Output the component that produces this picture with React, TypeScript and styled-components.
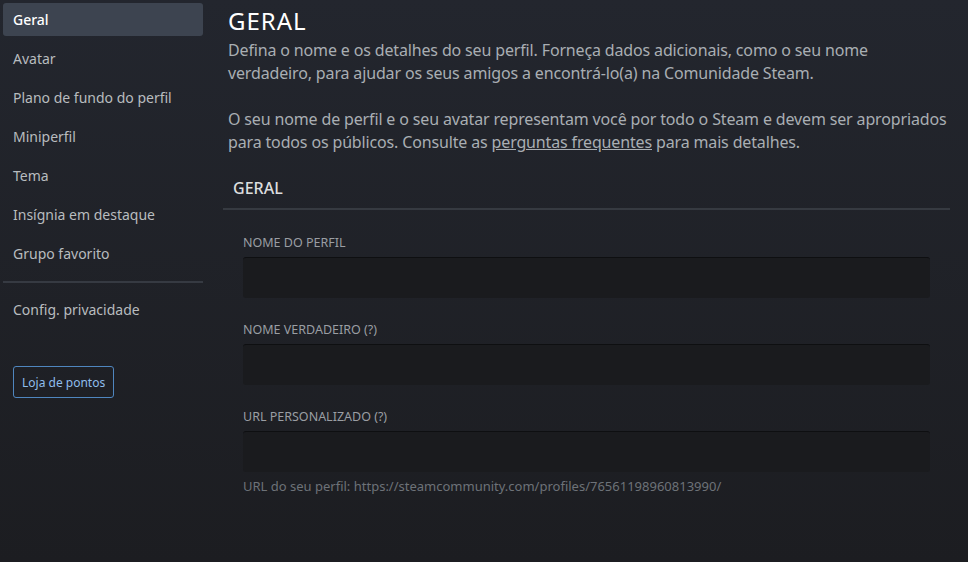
import React, { FC } from 'react';
import styled, { createGlobalStyle } from 'styled-components';

const GlobalStyle = createGlobalStyle`
  html, body {
    margin: 0;
    padding: 0;
    background: #1d1e22;
  }
  * {
    box-sizing: border-box;
  }
`;

const Page = styled.div`
  display: flex;
  width: 968px;
  height: 562px;
  overflow: hidden;
  background: linear-gradient(180deg, #23262e 0%, #1c1d21 100%);
  font-family: 'Noto Sans', 'Liberation Sans', sans-serif;
`;

const Sidebar = styled.nav`
  display: flex;
  flex-direction: column;
  width: 200px;
  flex-shrink: 0;
  margin: 3px 0 0 3px;
`;

const NavItem = styled.div<{ $active?: boolean }>`
  display: flex;
  align-items: center;
  height: 33px;
  margin-bottom: 6px;
  padding-left: 10px;
  border-radius: 3px;
  font-size: 14px;
  color: ${(p) => (p.$active ? '#ffffff' : '#b8bcbf')};
  font-weight: ${(p) => (p.$active ? 500 : 400)};
  background: ${(p) => (p.$active ? '#3d4450' : 'transparent')};
`;

const NavDivider = styled.div`
  height: 2px;
  margin: 5px 0 10px;
  background: #363a42;
`;

const PointsButton = styled.button`
  align-self: flex-start;
  margin: 34px 0 0 10px;
  height: 32px;
  padding: 0 8px;
  background: transparent;
  border: 1px solid #4f86bf;
  border-radius: 3px;
  font-family: inherit;
  font-size: 12px;
  color: #8fbdec;
`;

const Main = styled.main`
  display: flex;
  flex-direction: column;
  width: 727px;
  margin-left: 20px;
  padding-top: 6px;
`;

const Title = styled.h1`
  margin: 0 0 3px 5px;
  font-size: 24px;
  line-height: 30px;
  font-weight: 400;
  letter-spacing: 1px;
  color: #ffffff;
`;

const Intro = styled.p`
  margin: 0 0 23px 5px;
  font-size: 16px;
  line-height: 23px;
  letter-spacing: -0.15px;
  color: #a9aeb3;
`;

const FaqLink = styled.a`
  color: #a9aeb3;
  text-decoration: underline;
`;

const SectionHeader = styled.h2`
  margin: 0;
  padding: 0 0 9px 10px;
  border-bottom: 2px solid #363a41;
  font-size: 16px;
  line-height: 22px;
  font-weight: 500;
  color: #dcdedf;
`;

const Fields = styled.div`
  display: flex;
  flex-direction: column;
  padding: 24px 20px 0;
`;

const Field = styled.div`
  display: flex;
  flex-direction: column;
  margin-bottom: 23px;
`;

const Label = styled.label`
  font-size: 12.5px;
  line-height: 18px;
  margin-bottom: 5px;
  color: #9a9ea3;
  text-transform: uppercase;
`;

const Input = styled.input`
  height: 41px;
  width: 100%;
  border: none;
  border-top: 1px solid #0e0f11;
  border-radius: 3px;
  background: #1a1b1e;
  outline: none;
`;

const Hint = styled.div`
  margin-top: 5px;
  font-size: 13px;
  line-height: 18px;
  color: #6d7278;
`;

const fields = [
  { label: 'Nome do perfil' },
  { label: 'Nome verdadeiro (?)' },
  {
    label: 'URL personalizado (?)',
    hint: 'URL do seu perfil: https://steamcommunity.com/profiles/76561198960813990/',
  },
];

const navItems = [
  'Geral',
  'Avatar',
  'Plano de fundo do perfil',
  'Miniperfil',
  'Tema',
  'Insígnia em destaque',
  'Grupo favorito',
];

const App: FC = () => (
  <>
    <GlobalStyle />
    <Page>
      <Sidebar>
        {navItems.map((item, i) => (
          <NavItem key={item} $active={i === 0}>
            {item}
          </NavItem>
        ))}
        <NavDivider />
        <NavItem>Config. privacidade</NavItem>
        <PointsButton>Loja de pontos</PointsButton>
      </Sidebar>
      <Main>
        <Title>GERAL</Title>
        <Intro>
          Defina o nome e os detalhes do seu perfil. Forneça dados adicionais, como o seu nome
          verdadeiro, para ajudar os seus amigos a encontrá-lo(a) na Comunidade Steam.
        </Intro>
        <Intro>
          O seu nome de perfil e o seu avatar representam você por todo o Steam e devem ser
          apropriados para todos os públicos. Consulte as <FaqLink>perguntas frequentes</FaqLink>{' '}
          para mais detalhes.
        </Intro>
        <SectionHeader>GERAL</SectionHeader>
        <Fields>
          {fields.map((f) => (
            <Field key={f.label}>
              <Label>{f.label}</Label>
              <Input type="text" />
              {f.hint && <Hint>{f.hint}</Hint>}
            </Field>
          ))}
        </Fields>
      </Main>
    </Page>
  </>
);

export default App;
